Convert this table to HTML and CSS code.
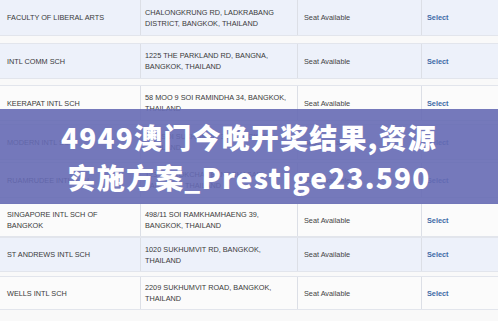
FILE: index.html
```html
<!DOCTYPE html>
<html>
<head>
<meta charset="utf-8">
<link rel="stylesheet" href="styles.css">
</head>
<body>
<div class="page">
  <div class="list">
    <div class="row blue r1">
      <div class="c name">FACULTY OF LIBERAL ARTS</div>
      <div class="c addr">CHALONGKRUNG RD, LADKRABANG<br>DISTRICT, BANGKOK, THAILAND</div>
      <div class="c status">Seat Available</div>
      <div class="c sel">Select</div>
    </div>
    <div class="row blue r2">
      <div class="c name">INTL COMM SCH</div>
      <div class="c addr">1225 THE PARKLAND RD, BANGNA,<br>BANGKOK, THAILAND</div>
      <div class="c status">Seat Available</div>
      <div class="c sel">Select</div>
    </div>
    <div class="row white r3">
      <div class="c name">KEERAPAT INTL SCH</div>
      <div class="c addr">58 MOO 9 SOI RAMINDHA 34, BANGKOK,<br>THAILAND</div>
      <div class="c status">Seat Available</div>
      <div class="c sel">Select</div>
    </div>
    <div class="row blue r4">
      <div class="c name">MODERN INTL SCH</div>
      <div class="c addr">1/15 SOI SUKHUMVIT 31, BANGKOK,<br>THAILAND</div>
      <div class="c status">Seat Available</div>
      <div class="c sel">Select</div>
    </div>
    <div class="row white r5">
      <div class="c name">RUAMRUDEE INTL SCH</div>
      <div class="c addr">123 SOI KOKCHAI, BANGCHASAD,<br>BANGKOK, THAILAND</div>
      <div class="c status">Seat Available</div>
      <div class="c sel">Select</div>
    </div>
    <div class="row white r6">
      <div class="c name">SINGAPORE INTL SCH OF<br>BANGKOK</div>
      <div class="c addr">498/11 SOI RAMKHAMHAENG 39,<br>BANGKOK, THAILAND</div>
      <div class="c status">Seat Available</div>
      <div class="c sel">Select</div>
    </div>
    <div class="row blue r7">
      <div class="c name">ST ANDREWS INTL SCH</div>
      <div class="c addr">1020 SUKHUMVIT RD, BANGKOK,<br>THAILAND</div>
      <div class="c status">Seat Available</div>
      <div class="c sel">Select</div>
    </div>
    <div class="row white r8">
      <div class="c name">WELLS INTL SCH</div>
      <div class="c addr">2209 SUKHUMVIT ROAD, BANGKOK,<br>THAILAND</div>
      <div class="c status">Seat Available</div>
      <div class="c sel">Select</div>
    </div>
  </div>
  <div class="banner">
    <div class="banner-line">4949澳门今晚开奖结果,资源</div>
    <div class="banner-line">实施方案_Prestige23.590</div>
  </div>
</div>
</body>
</html>
```

FILE: styles.css
```css
html, body {
  margin: 0;
  padding: 0;
}
body {
  width: 498px;
  height: 321px;
  overflow: hidden;
  background: #f9f9f9;
  font-family: "Liberation Sans", Arial, sans-serif;
}
.page {
  position: relative;
  width: 498px;
  height: 321px;
}
.list {
  display: flex;
  flex-direction: column;
}
.row {
  display: grid;
  grid-template-columns: 140px 157px 124px 77px;
  border-top: 1px solid #e2e5ec;
  border-bottom: 1px solid #e2e5ec;
  box-sizing: border-box;
}
.blue { background: #edf1fa; }
.white { background: #fbfbfb; }
.c {
  display: flex;
  align-items: center;
  font-size: 7.3px;
  line-height: 11px;
  color: #3a3a3a;
  border-left: 1px solid #dcdfe6;
  padding-left: 5px;
}
.c.name { border-left: none; padding-left: 7px; }
.c.addr { padding-left: 4px; }
.c.status { padding-left: 6px; color: #444; }
.c.sel { padding-left: 5px; font-weight: bold; color: #3f6aa6; }
.r1 { height: 37px; margin-top: -1px; }
.r2 { height: 36px; margin-top: 7px; }
.r3 { height: 36px; margin-top: 6px; }
.r4 { height: 36px; margin-top: 3px; }
.r5 { height: 36px; margin-top: 2px; }
.r6 { height: 34px; margin-top: 5px; }
.r7 { height: 35px; margin-top: 0; }
.r8 { height: 34px; margin-top: 4px; }
.banner {
  position: absolute;
  left: 0;
  top: 109px;
  width: 498px;
  height: 95px;
  background: rgba(102, 106, 180, 0.9);
  display: flex;
  flex-direction: column;
  align-items: center;
  justify-content: center;
}
.banner-line {
  font-family: "Noto Sans CJK SC", "Noto Sans", sans-serif;
  font-weight: 900;
  font-size: 28px;
  line-height: 40px;
  letter-spacing: 1.2px;
  color: #ffffff;
  white-space: nowrap;
}
```
